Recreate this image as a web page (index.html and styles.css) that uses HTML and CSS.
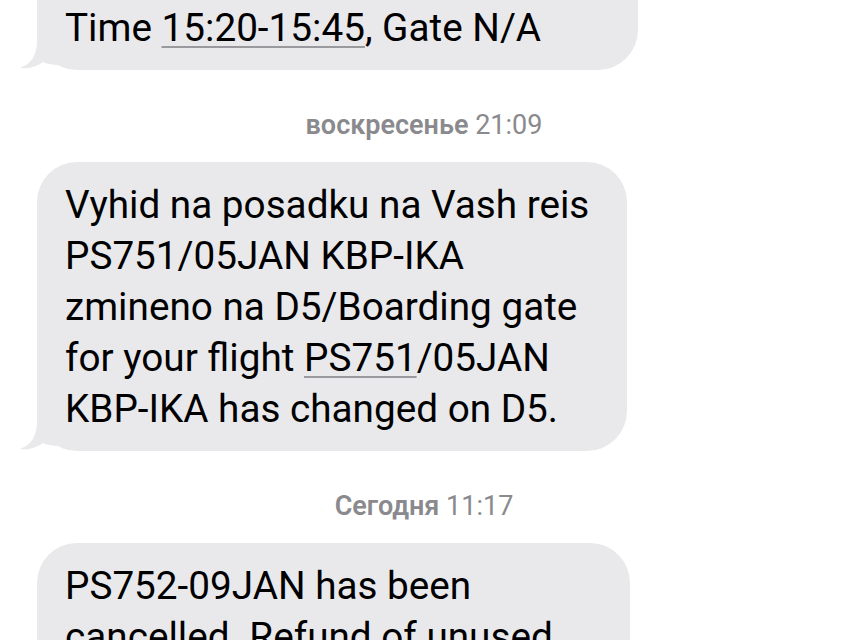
FILE: index.html
```html
<!DOCTYPE html>
<html lang="ru">
<head>
    <meta charset="UTF-8">
    <meta name="viewport" content="width=device-width, initial-scale=1.0">
    <title>Сообщения</title>
    <link rel="stylesheet" href="styles.css">
</head>
<body>
<div class="thread">
    <div class="bubble bubble-first msg-gate">
        <p>Time <span class="link">15:20-15:45</span>, Gate N/A</p>
        <svg class="tail" width="40" height="40" viewBox="0 0 40 40"><path d="M18,0 L18,10 C18,26 12,34 1,38 C10,39.5 18,36 24,32 C28,34 34,35 40,35 L40,0 Z"/></svg>
    </div>

    <div class="stamp"><b>воскресенье</b> 21:09</div>

    <div class="bubble msg-boarding">
        <p>Vyhid na posadku na Vash reis<br>
        PS751/05JAN KBP-IKA<br>
        zmineno na D5/Boarding gate<br>
        for your flight <span class="link">PS751</span>/05JAN<br>
        KBP-IKA has changed on D5.</p>
        <svg class="tail" width="40" height="40" viewBox="0 0 40 40"><path d="M18,0 L18,10 C18,26 12,34 1,38 C10,39.5 18,36 24,32 C28,34 34,35 40,35 L40,0 Z"/></svg>
    </div>

    <div class="stamp"><b>Сегодня</b> 11:17</div>

    <div class="bubble msg-cancel">
        <p>PS752-09JAN has been<br>
        cancelled. Refund of unused<br>
        ticket</p>
    </div>
</div>
</body>
</html>
```

FILE: styles.css
```css
body {
    margin: 0;
    background: #ffffff;
    font-family: Roboto, "Liberation Sans", sans-serif;
    overflow: hidden;
}

.thread {
    display: flex;
    flex-direction: column;
    padding-left: 37px;
}

.bubble {
    position: relative;
    background-color: #e9e9eb;
    border-radius: 40px;
    padding: 17px 28px;
    box-sizing: border-box;
}

.bubble p {
    margin: 0;
    font-size: 38.7px;
    line-height: 51px;
    color: #000;
}

.bubble-first {
    margin-top: -58px;
    padding-top: 60px;
    border-top-left-radius: 0;
    border-top-right-radius: 0;
}

.msg-gate {
    width: 601px;
}

.msg-boarding {
    width: 590px;
}

.msg-cancel {
    width: 593px;
}

.link {
    text-decoration: underline;
    text-decoration-color: #9a9a9e;
    text-decoration-thickness: 1.5px;
    text-underline-offset: 5px;
}

.tail {
    position: absolute;
    left: -18px;
    bottom: 0;
    fill: #e9e9eb;
}

.stamp {
    margin: 40px 0 22px -37px;
    text-align: center;
    font-size: 27px;
    line-height: 30px;
    color: #8a8a8e;
}

.stamp b {
    font-weight: 600;
}
```
